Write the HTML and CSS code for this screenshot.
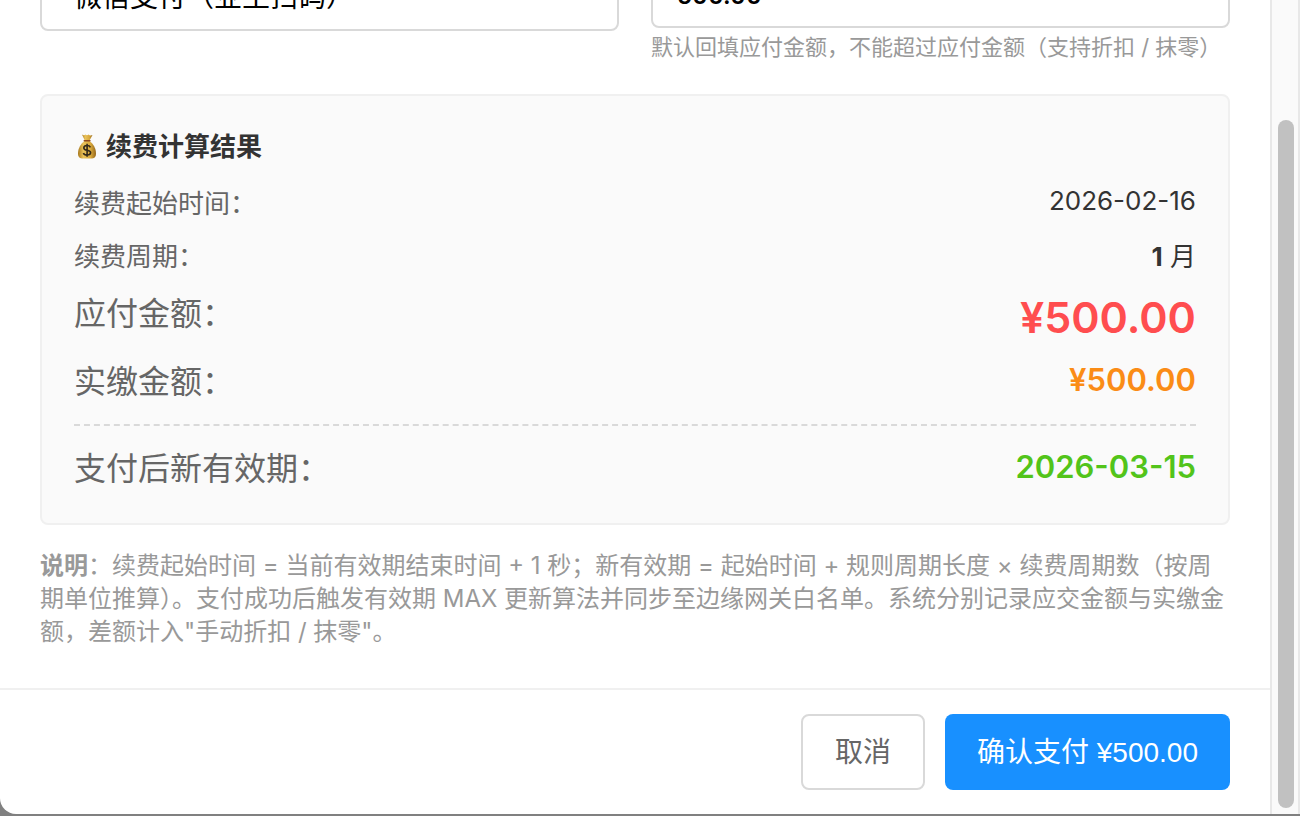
FILE: index.html
```html
<!DOCTYPE html>
<html lang="zh-CN">
<head>
  <meta charset="UTF-8" />
  <meta name="viewport" content="width=device-width, initial-scale=1.0" />
  <title>续费</title>
  <link rel="stylesheet" href="styles.css">
</head>
<body>

<div class="modal">
  <form class="modal-main">

    <div class="modal-body">
      <div class="form-row">
        <div class="form-item">
          <select class="control control-select" id="pay-method" aria-label="支付方式">
            <option>微信支付（业主扫码）</option>
          </select>
        </div>
        <div class="form-item">
          <input class="control control-amount" type="text" id="paid-amount" aria-label="实缴金额" value="500.00" />
          <p class="hint">默认回填应付金额，不能超过应付金额（支持折扣 / 抹零）</p>
        </div>
      </div>

      <section class="result">
        <h2 class="result-title">
          <svg class="icon-bag" viewBox="0 0 24 26" aria-hidden="true">
            <defs>
              <linearGradient id="bag" x1="0" y1="0" x2="1" y2="0">
                <stop offset="0" stop-color="#a8781c" />
                <stop offset="0.3" stop-color="#e9c25a" />
                <stop offset="0.7" stop-color="#d9a93c" />
                <stop offset="1" stop-color="#94661a" />
              </linearGradient>
            </defs>
            <path d="M8 0.5 Q10 2 11.5 0.5 Q13 2 14.5 0.5 Q16 2 18.5 1 L15.5 6.5 H10.8 Z" fill="url(#bag)" />
            <path d="M10.5 7 C6.5 10 4 14.5 4 19.5 C4 23.4 6 24.5 9 24.5 H17 C20 24.5 22 23.4 22 19.5 C22 14.5 19.5 10 15.5 7 Z" fill="url(#bag)" />
            <path d="M10.3 6.8 H15.9" stroke="#8f4a20" stroke-width="1.6" stroke-linecap="round" />
            <path d="M16.4 13.4 C15.8 12 14.7 11.5 13.1 11.5 C11.1 11.5 9.8 12.4 9.8 13.9 C9.8 17.2 16.6 15.3 16.6 18.6 C16.6 20.2 15.2 21 13.1 21 C11.2 21 9.9 20.4 9.4 18.9 M13.1 9.8 V22.7" fill="none" stroke="#33291a" stroke-width="1.6" />
          </svg>
          续费计算结果
        </h2>
        <dl class="rows">
          <div class="row">
            <dt>续费起始时间：</dt>
            <dd class="date">2026-02-16</dd>
          </div>
          <div class="row">
            <dt>续费周期：</dt>
            <dd><strong>1</strong> 月</dd>
          </div>
          <div class="row row-large">
            <dt>应付金额：</dt>
            <dd class="payable">¥500.00</dd>
          </div>
          <div class="row row-large">
            <dt>实缴金额：</dt>
            <dd class="paid">¥500.00</dd>
          </div>
          <div class="row row-large row-total">
            <dt>支付后新有效期：</dt>
            <dd class="expire">2026-03-15</dd>
          </div>
        </dl>
      </section>

      <p class="note"><strong>说明</strong>：续费起始时间 = 当前有效期结束时间 + 1 秒；新有效期 = 起始时间 + 规则周期长度 × 续费周期数（按周期单位推算）。支付成功后触发有效期 MAX 更新算法并同步至边缘网关白名单。系统分别记录应交金额与实缴金额，差额计入"手动折扣 / 抹零"。</p>
    </div>

    <footer class="modal-footer">
      <button type="button" class="btn btn-cancel">取消</button>
      <button type="button" class="btn btn-primary">确认支付 ¥500.00</button>
    </footer>
  </form>

  <div class="scrollbar" aria-hidden="true">
    <div class="thumb"></div>
  </div>
</div>

</body>
</html>
```
FILE: styles.css
```css
*,
*::before,
*::after {
  box-sizing: border-box;
  margin: 0;
  padding: 0;
}

body {
  height: 100vh;
  padding-bottom: 2px;
  overflow: hidden;
  background-color: #808080;
  font-family: Inter, "Noto Sans CJK SC", sans-serif;
  font-size: 26px;
  color: #333;
}

.modal {
  display: flex;
  height: 100%;
  background-color: #fff;
  border-bottom-left-radius: 16px;
  overflow: hidden;
}

/* the form is scrolled to its end */
.modal-main {
  flex: 1;
  min-width: 0;
  display: flex;
  flex-direction: column;
  justify-content: flex-end;
}

.modal-body {
  padding: 0 40px 40px;
}

.form-row {
  display: grid;
  grid-template-columns: 1fr 1fr;
  gap: 32px;
  margin-bottom: 31px;
}

.control {
  display: block;
  width: 100%;
  border: 2px solid #d9d9d9;
  border-radius: 8px;
  background-color: #fff;
  color: #000;
  font-family: inherit;
  font-size: 28px;
}

.control-select {
  height: 69px;
  padding: 0 32px;
  appearance: none;
}

.control-amount {
  height: 66px;
  padding: 0 24px;
  font-size: 24px;
  font-weight: 600;
}

.hint {
  margin-top: 4px;
  font-size: 22px;
  line-height: 31px;
  color: #999;
}

.result {
  padding: 32px;
  margin-bottom: 24px;
  border: 2px solid #f0f0f0;
  border-radius: 8px;
  background-color: #fafafa;
}

.result-title {
  display: flex;
  align-items: center;
  gap: 8px;
  margin-bottom: 20px;
  font-size: 26px;
  font-weight: 600;
  line-height: 37px;
}

.icon-bag {
  width: 24px;
  height: 26px;
}

.rows {
  display: flex;
  flex-direction: column;
  gap: 16px;
}

.row {
  display: flex;
  justify-content: space-between;
  line-height: 37px;
}

.row dt {
  color: #666;
}

.row .date {
  line-height: 31px;
}

.row-large {
  font-size: 32px;
  line-height: 45px;
}

.row .payable {
  font-size: 43px;
  font-weight: 600;
  line-height: 52px;
  color: #ff4d4f;
}

.row .paid,
.row .expire {
  font-size: 31px;
  font-weight: 600;
  line-height: 41px;
}

.row .paid {
  color: #fa8c16;
}

.row .expire {
  color: #52c41a;
}

.row-total {
  margin-top: 4px;
  padding-top: 20px;
  border-top: 2px dashed #d9d9d9;
}

.note {
  font-size: 24px;
  line-height: 33px;
  color: #999;
}

.modal-footer {
  display: flex;
  justify-content: flex-end;
  gap: 20px;
  padding: 24px 40px;
  border-top: 2px solid #f0f0f0;
}

.btn {
  height: 76px;
  padding: 0 32px 4px;
  border: none;
  border-radius: 8px;
  font-family: "Liberation Sans", "Noto Sans CJK SC", sans-serif;
  font-size: 28px;
  cursor: pointer;
}

.btn-cancel {
  border: 2px solid #d9d9d9;
  background-color: #fff;
  color: #666;
}

.btn-primary {
  background-color: #1890ff;
  color: #fff;
}

.scrollbar {
  display: flex;
  flex-direction: column;
  width: 30px;
  padding: 120px 4px 6px 6px;
  border: solid #e8e8e8;
  border-width: 0 2px;
  background-color: #fafafa;
}

.thumb {
  flex: 1;
  border-radius: 8px;
  background-color: #c1c1c1;
}
```
